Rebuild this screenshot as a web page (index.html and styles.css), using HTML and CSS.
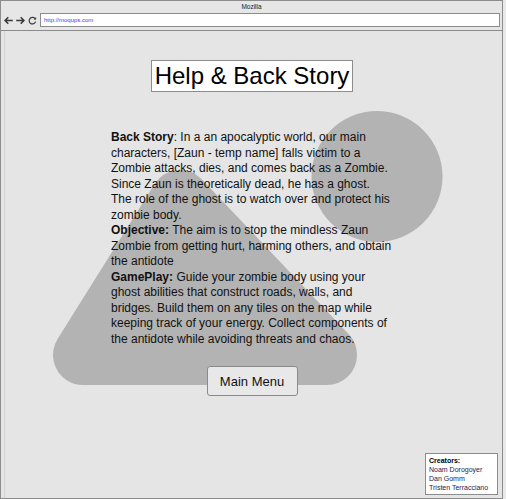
FILE: index.html
```html
<!DOCTYPE html>
<html>
<head>
<meta charset="utf-8">
<title>Help &amp; Back Story</title>
<link rel="stylesheet" href="styles.css">
</head>
<body>
<svg class="backdrop" width="506" height="499" viewBox="0 0 506 499">
  <circle cx="377" cy="176.5" r="65.5" fill="#b3b3b3"/>
  <polygon points="180,200 83,355 327,355" fill="#b3b3b3" stroke="#b3b3b3" stroke-width="60" stroke-linejoin="round"/>
</svg>
<div class="window">
  <div class="chrome">
    <div class="chrome-title">Mozilla</div>
    <div class="chrome-bar">
      <svg class="nav-icon back" width="9" height="9" viewBox="0 0 9 9"><path d="M8.8 4.5H1.3M4.3 1.3L1.1 4.5L4.3 7.7" fill="none" stroke="#3a3a3a" stroke-width="1.6"/></svg>
      <svg class="nav-icon forward" width="9" height="9" viewBox="0 0 9 9"><path d="M0.2 4.5H7.7M4.7 1.3L7.9 4.5L4.7 7.7" fill="none" stroke="#3a3a3a" stroke-width="1.6"/></svg>
      <svg class="nav-icon reload" width="9" height="9" viewBox="0 0 9 9"><path d="M7.4 3.2A3.3 3.3 0 1 0 7.6 5.6" fill="none" stroke="#3a3a3a" stroke-width="1.2"/><path d="M5.6 3.4H8.1V0.9Z" fill="#3a3a3a"/></svg>
      <div class="address">http://moqups.com</div>
    </div>
  </div>
  <div class="page">
    <div class="content">
      <h1 class="title">Help &amp; Back Story</h1>
      <div class="story">
        <p><b>Back Story</b>: In a an apocalyptic world, our main characters, [Zaun - temp name] falls victim to a Zombie attacks, dies, and comes back as a Zombie. Since Zaun is theoretically dead, he has a ghost. The role of the ghost is to watch over and protect his zombie body.</p>
        <p><b>Objective:</b> The aim is to stop the mindless Zaun Zombie from getting hurt, harming others, and obtain the antidote</p>
        <p><b>GamePlay:</b> Guide your zombie body using your ghost abilities that construct roads, walls, and bridges. Build them on any tiles on the map while keeping track of your energy. Collect components of the antidote while avoiding threats and chaos.</p>
      </div>
      <button class="menu-btn">Main Menu</button>
      <div class="creators">
        <div class="creators-head">Creators:</div>
        <div>Noam Dorogoyer</div>
        <div>Dan Gomm</div>
        <div>Tristen Terracciano</div>
      </div>
    </div>
  </div>
</div>
</body>
</html>
```

FILE: styles.css
```css
html, body {
  margin: 0;
  padding: 0;
}
body {
  width: 506px;
  height: 499px;
  background: #e9e9e9;
  font-family: "Liberation Sans", Arial, Helvetica, sans-serif;
  color: #000;
  position: relative;
  overflow: hidden;
}
.backdrop {
  position: absolute;
  left: 0;
  top: 0;
  z-index: 0;
}
.window {
  width: 501px;
  height: 497px;
  border: 1px solid #8c8c8c;
  background: #e5e5e5;
  display: flex;
  flex-direction: column;
}
.chrome {
  height: 29px;
  border-bottom: 1px solid #8c8c8c;
  background: #e6e6e6;
  display: flex;
  flex-direction: column;
  position: relative;
  z-index: 1;
}
.chrome-title {
  height: 12px;
  line-height: 12px;
  font-size: 6.5px;
  text-align: center;
  color: #222;
}
.chrome-bar {
  height: 14px;
  display: flex;
  align-items: center;
}
.nav-icon {
  flex: none;
}
.back {
  margin-left: 3px;
}
.forward {
  margin-left: 3px;
}
.reload {
  margin-left: 3px;
}
.address {
  flex: 1;
  height: 12px;
  margin-left: 3px;
  margin-right: 2px;
  border: 1px solid #8c8c8c;
  background: #fff;
  font-size: 6px;
  line-height: 12px;
  padding-left: 3px;
  color: #3c3cf0;
}
.page {
  flex: 1;
  margin-left: 3px;
  border-left: 1px solid #d2d2d2;
  display: flex;
  flex-direction: column;
}
.content {
  flex: 1;
  position: relative;
  z-index: 1;
  display: flex;
  flex-direction: column;
  align-items: center;
  padding-top: 29px;
  padding-right: 3px;
}
.title {
  margin: 0;
  font-size: 24px;
  font-weight: normal;
  line-height: 28px;
  padding: 1px 3px;
  border: 1px solid #8c8c8c;
  background: #fff;
  white-space: nowrap;
}
.story {
  width: 282px;
  margin-top: 38px;
  font-size: 12px;
  line-height: 15.5px;
  color: #111;
}
.story p {
  margin: 0;
}
.menu-btn {
  margin-top: 19px;
  width: 91px;
  height: 30px;
  border: 1px solid #8a8a8a;
  border-radius: 3px;
  background: #e8e8e8;
  font-family: "Liberation Sans", Arial, Helvetica, sans-serif;
  font-size: 13px;
  color: #111;
  padding: 0;
}
.creators {
  margin-top: auto;
  margin-bottom: 3px;
  align-self: flex-end;
  margin-right: 1px;
  width: 65px;
  border: 1px solid #8c8c8c;
  background: #fff;
  padding: 2px 3px;
  font-size: 7px;
  line-height: 9px;
  color: #1d2250;
}
.creators-head {
  font-weight: bold;
  color: #000;
}
```
